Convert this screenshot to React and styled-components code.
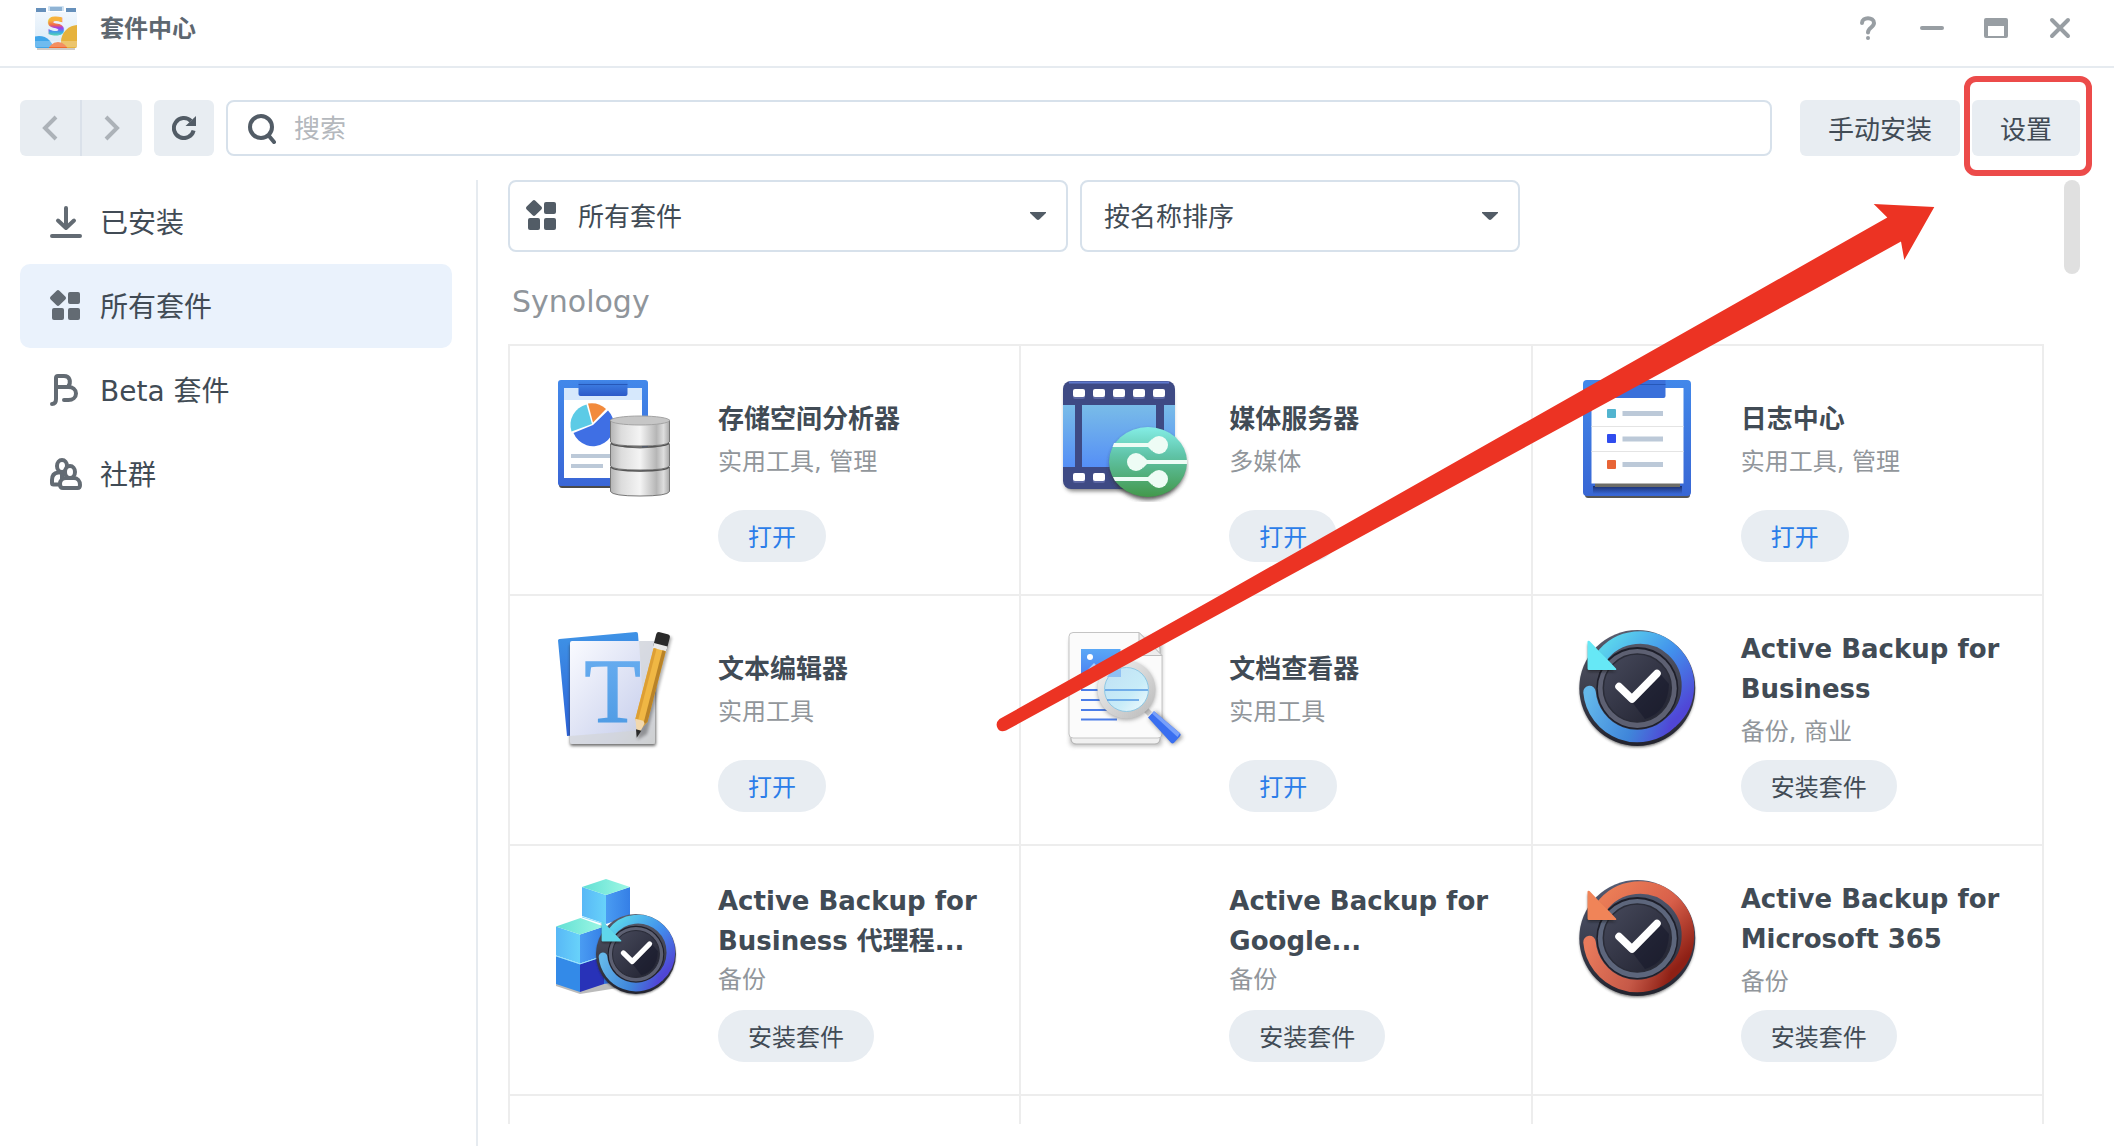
import React, { useState } from 'react';
import styled, { createGlobalStyle } from 'styled-components';

const packages = [
    { name: '存储空间分析器', tags: '实用工具, 管理', installed: true, icon: StorageIcon },
    { name: '媒体服务器', tags: '多媒体', installed: true, icon: MediaIcon },
    { name: '日志中心', tags: '实用工具, 管理', installed: true, icon: LogIcon },
    { name: '文本编辑器', tags: '实用工具', installed: true, icon: TextIcon },
    { name: '文档查看器', tags: '实用工具', installed: true, icon: DocumentIcon },
    { name: 'Active Backup for Business', tags: '备份, 商业', icon: BackupIcon },
    { name: 'Active Backup for Business 代理程...', tags: '备份', clamped: true, icon: AgentIcon },
    { name: 'Active Backup for Google...', tags: '备份', clamped: true },
    { name: 'Active Backup for Microsoft 365', tags: '备份', icon: Microsoft365Icon },
]

const menu = [
    { id: 'installed', label: '已安装', icon: DownloadGlyph },
    { id: 'all', label: '所有套件', icon: GridGlyph },
    { id: 'beta', label: 'Beta 套件', icon: BetaGlyph },
    { id: 'community', label: '社群', icon: PeopleGlyph },
]

export default function App() {
    const [active, setActive] = useState('all');
    const [search, setSearch] = useState('');

    return (
        <Window>
            <GlobalStyle />
            <TitleBar>
                <StoreLogo />
                <h1>套件中心</h1>
                <WindowControls />
            </TitleBar>
            <Toolbar>
                <NavButtons>
                    <button aria-label="后退">
                        <svg width="16" height="28" viewBox="0 0 16 28"><path d="M14 3 3 14l11 11" /></svg>
                    </button>
                    <button aria-label="前进">
                        <svg width="16" height="28" viewBox="0 0 16 28"><path d="M2 3l11 11L2 25" /></svg>
                    </button>
                </NavButtons>
                <RefreshButton aria-label="刷新">
                    <svg width="24" height="24" viewBox="0 0 24 24">
                        <path d="M21.6 14.5A10 10 0 1 1 19 5" fill="none" stroke="#525c66" strokeWidth="4" />
                        <path d="M24 0v10H13.5z" fill="#525c66" />
                    </svg>
                </RefreshButton>
                <SearchBox>
                    <svg width="30" height="32" viewBox="0 0 30 32" fill="none" stroke="#525c66" strokeWidth="4">
                        <circle cx="15" cy="15" r="11" />
                        <path d="m23 24 5 6" strokeLinecap="round" />
                    </svg>
                    <input type="text" aria-label="搜索" placeholder="搜索" value={search} onChange={(e) => setSearch(e.target.value)} />
                </SearchBox>
                <Actions>
                    <ToolButton>手动安装</ToolButton>
                    <Highlight>
                        <ToolButton>设置</ToolButton>
                    </Highlight>
                </Actions>
            </Toolbar>
            <Body>
                <Sidebar>
                    {menu.map((item) => (
                        <MenuItem key={item.id} $active={active === item.id} onClick={() => setActive(item.id)}>
                            <item.icon />
                            <span>{item.label}</span>
                        </MenuItem>
                    ))}
                </Sidebar>
                <Content>
                    <Filters>
                        <SelectBox $width={560} $pad={16}>
                            <GridGlyph color="#525c66" />
                            <select aria-label="套件类别">
                                <option>所有套件</option>
                            </select>
                            <Caret />
                        </SelectBox>
                        <SelectBox $width={440} $pad={22}>
                            <select aria-label="排序方式">
                                <option>按名称排序</option>
                            </select>
                            <Caret />
                        </SelectBox>
                    </Filters>
                    <SectionTitle>Synology</SectionTitle>
                    <PackageGrid>
                        {packages.map((item) => <PackageCard key={item.name} item={item} />)}
                        <Card />
                        <Card />
                        <Card />
                    </PackageGrid>
                </Content>
                <Scrollbar />
            </Body>
            <PointerArrow viewBox="0 0 940 530" aria-hidden="true">
                <path d="M3.5 515 215.7 396 763.3 86 891.3 13.5 877.7 0 938.3 3 908.3 56 905 37.5 817.5 86 249 396 10 526.5Q4 529 1.5 524T3.5 515z" fill="#ec3323" />
            </PointerArrow>
        </Window>
    )
}

function PackageCard({ item }) {
    return (
        <Card>
            <IconSlot>{item.icon && <item.icon />}</IconSlot>
            <CardText>
                <CardInfo $clamped={item.clamped}>
                    <h3>{item.name}</h3>
                    <p>{item.tags}</p>
                </CardInfo>
                <CardButton $open={item.installed}>{item.installed ? '打开' : '安装套件'}</CardButton>
            </CardText>
        </Card>
    )
}

function WindowControls() {
    return (
        <Controls>
            <button aria-label="帮助">
                <svg viewBox="0 0 24 24" fill="none" stroke="#989ea3" strokeWidth="4" strokeLinecap="round">
                    <path d="M6 7C6 .5 18 .5 18 7c0 4.500-6 4.500-6 9.500" />
                    <circle cx="12" cy="22" r="2" fill="#989ea3" stroke="none" />
                </svg>
            </button>
            <button aria-label="最小化">
                <svg viewBox="0 0 24 24"><rect y="10" width="24" height="4" rx="2" fill="#989ea3" /></svg>
            </button>
            <button aria-label="最大化">
                <svg viewBox="0 0 24 24">
                    <path d="M2 2h20q2 0 2 2v16q0 2-2 2H2q-2 0-2-2V4q0-2 2-2zm2 8v10h16V10z" fill="#989ea3" fillRule="evenodd" />
                </svg>
            </button>
            <button aria-label="关闭">
                <svg viewBox="0 0 24 24" stroke="#989ea3" strokeWidth="4" strokeLinecap="round">
                    <path d="m4 4 16 16M20 4 4 20" />
                </svg>
            </button>
        </Controls>
    )
}

function StoreLogo() {
    return (
        <svg width="44" height="46" viewBox="0 0 44 46" aria-hidden="true">
            <defs>
                <linearGradient id="bag" x1="0" y1="0" x2="0" y2="1">
                    <stop offset="0" stopColor="#f1f7fd" />
                    <stop offset="1" stopColor="#d8e9f7" />
                </linearGradient>
                <linearGradient id="bagS" x1="0" y1="0" x2="0" y2="1">
                    <stop offset="0.3" stopColor="#f7b23c" />
                    <stop offset="0.45" stopColor="#f0684a" />
                    <stop offset="0.55" stopColor="#9a3cf2" />
                    <stop offset="0.68" stopColor="#3f9fe8" />
                    <stop offset="0.8" stopColor="#4fd0b4" />
                </linearGradient>
                <clipPath id="bagClip"><path d="M1 8h42v34q0 2-2 2H3q-2 0-2-2z" /></clipPath>
            </defs>
            <path d="M3 44h38v2H3z" fill="#b9b4ae" opacity="0.7" />
            <path d="M2 4h40v4H2z" fill="#6690bb" />
            <path d="M13 8V3q0-2 2-2h14q2 0 2 2v5z" fill="#cfe2f2" stroke="#fff" strokeWidth="2" />
            <path d="M16 3h12v4H16z" fill="#8fb3d4" />
            <g clipPath="url(#bagClip)">
                <path d="M1 8h42v36H1z" fill="url(#bag)" />
                <circle cx="44" cy="38" r="17" fill="#e6b23c" />
                <circle cx="5" cy="47" r="15" fill="#3fa5ea" />
                <circle cx="24" cy="48" r="10" fill="#f0682c" />
                <path d="M1 37h42v6H1z" fill="#fff" opacity="0.25" />
            </g>
            <text x="22" y="31" textAnchor="middle" fontFamily="DejaVu Sans" fontSize="25" fontWeight="700" fill="url(#bagS)" stroke="url(#bagS)">S</text>
        </svg>
    )
}

function DownloadGlyph() {
    return (
        <svg width="32" height="32" viewBox="0 0 32 32" fill="none" stroke="#636b73" strokeWidth="4" strokeLinecap="round" strokeLinejoin="round">
            <path d="M16 2v20M8 14.500l8 7.500 8-7.500M2 30h28" />
        </svg>
    )
}

function GridGlyph({ color = '#636b73' }) {
    return (
        <svg width="32" height="32" viewBox="0 0 32 32" fill={color}>
            <path d="M6.600.700q1.400-1.400 2.800 0l5.900 5.900q1.400 1.400 0 2.800l-5.900 5.900q-1.400 1.400-2.800 0L.7 9.400q-1.400-1.400 0-2.800z" />
            <rect x="18" y="2" width="12" height="12" rx="2" />
            <rect x="2" y="18" width="12" height="12" rx="2" />
            <rect x="18" y="18" width="12" height="12" rx="2" />
        </svg>
    )
}

function BetaGlyph() {
    return (
        <svg width="32" height="32" viewBox="0 0 32 32" fill="none" stroke="#636b73" strokeWidth="4" strokeLinecap="round" strokeLinejoin="round">
            <path d="M2 30c3 0 4-2 4-5V4q0-2 2-2h6c6 0 7.500 6 4 11M6 13h12.500c4 0 7.500 2.500 7.500 6.500s-3.500 6.500-7.500 6.500H14" />
        </svg>
    )
}

function PeopleGlyph() {
    return (
        <svg width="32" height="32" viewBox="0 0 32 32" fill="#fff" stroke="#636b73" strokeWidth="4" strokeLinejoin="round">
            <path d="M8 14.500c-4 .500-6 3.500-6 7.500v3q0 1.500 1.500 1.500H12V14z" />
            <ellipse cx="12" cy="8" rx="5" ry="6" />
            <path d="M10 26c0-4 3-6 6-6h8c3.500 0 6 3 6 7 0 2-1 3-2.500 3H13c-2 0-3-1-3-4z" />
            <ellipse cx="20" cy="14" rx="5" ry="6" />
        </svg>
    )
}

function Caret() {
    return <svg width="16" height="8" viewBox="0 0 16 8" aria-hidden="true"><path d="M0 0h16v1L9.500 7.200q-1.500 1.400-3 0L0 1z" fill="#525c66" /></svg>
}

/* package icons, all on a 128 x 128 canvas */

function StorageIcon() {
    return (
        <svg width="128" height="128" viewBox="0 0 128 128" aria-hidden="true">
            <defs>
                <linearGradient id="board" x1="0" y1="0" x2="0" y2="1">
                    <stop offset="0" stopColor="#4288ea" />
                    <stop offset="1" stopColor="#3a66d6" />
                </linearGradient>
                <linearGradient id="clip" x1="0" y1="0" x2="0" y2="1">
                    <stop offset="0" stopColor="#4288ea" />
                    <stop offset="1" stopColor="#2c5ac8" />
                </linearGradient>
                <linearGradient id="steel">
                    <stop offset="0" stopColor="#b4b4b4" />
                    <stop offset="0.18" stopColor="#dcdcdc" />
                    <stop offset="0.5" stopColor="#f4f4f4" />
                    <stop offset="0.78" stopColor="#b6b6b6" />
                    <stop offset="0.9" stopColor="#dedede" />
                    <stop offset="1" stopColor="#a8a8a8" />
                </linearGradient>
            </defs>
            <rect x="9" y="10" width="88" height="104" rx="3" fill="#4a4a4a" />
            <rect x="8" y="6" width="90" height="106" rx="3" fill="url(#board)" />
            <path d="M14 14h78v90H14z" fill="#fff" />
            <path d="M14 14h78v12H14z" fill="#d6e8fc" />
            <path d="M28.5 6h49v14q0 2-2 2h-45q-2 0-2-2z" fill="url(#clip)" />
            <path d="M28.5 10.5h49" stroke="#2658b8" />
            <path d="M42 50 21.5 57.5A21 21 0 0 1 36.5 30.5z" fill="#5ccbe6" />
            <path d="M43 48.5 38 29.5a21 21 0 0 1 18 5.5z" fill="#f28a3c" />
            <path d="M43 51 58 36.5A21 21 0 1 1 23.5 59z" fill="#3f6fe4" />
            <path d="M21 80h42v4H21zM21 90h32v4H21z" fill="#bcc9d8" />
            <g fill="url(#steel)" stroke="#777" strokeWidth="1">
                <path d="M60.5 93q29.5 8 59 0v24.5q-2 4.5-29.5 4.5t-29.5-4.5z" />
                <path d="M60.5 70q29.5 8 59 0v22q-2 4-29.5 4t-29.5-4z" />
                <path d="M60.5 46h59v22q-2 4-29.5 4t-29.5-4z" />
            </g>
            <ellipse cx="90" cy="46.5" rx="29.5" ry="4.5" fill="#c6c6c6" stroke="#a4a4a4" />
            <path d="M61 69q2 4 29 4t29-4M61 93q2 4 29 4t29-4" fill="none" stroke="#555" strokeWidth="1.5" />
        </svg>
    )
}

function MediaIcon() {
    return (
        <svg width="128" height="128" viewBox="0 0 128 128" aria-hidden="true">
            <defs>
                <linearGradient id="sky" x1="0" y1="0" x2="0" y2="1">
                    <stop offset="0" stopColor="#79bce8" />
                    <stop offset="1" stopColor="#558ff6" />
                </linearGradient>
                <linearGradient id="disc" x1="0" y1="0" x2="0" y2="1">
                    <stop offset="0" stopColor="#84eee6" />
                    <stop offset="0.4" stopColor="#60c4a8" />
                    <stop offset="1" stopColor="#43984b" />
                </linearGradient>
                <filter id="soft" x="-20%" y="-20%" width="140%" height="150%"><feGaussianBlur stdDeviation="2" /></filter>
            </defs>
            <rect x="4" y="12" width="108" height="105" rx="8" fill="#444" opacity="0.7" filter="url(#soft)" />
            <rect x="2" y="7" width="112" height="108" rx="8" fill="#3e4a84" />
            <path d="M8 8.5h100" stroke="#5e78cc" strokeWidth="2" />
            <path d="M2 31h12v62H2zM21 31h74v62H21zM103 31h11v62h-11z" fill="url(#sky)" />
            <g fill="#5c67a4">
                <rect x="12" y="17" width="12" height="8" rx="2" />
                <rect x="32" y="17" width="12" height="8" rx="2" />
                <rect x="52" y="17" width="12" height="8" rx="2" />
                <rect x="72" y="17" width="12" height="8" rx="2" />
                <rect x="92" y="17" width="12" height="8" rx="2" />
                <rect x="12" y="101" width="12" height="8" rx="2" />
                <rect x="32" y="101" width="12" height="8" rx="2" />
            </g>
            <g fill="#fff">
                <rect x="12" y="15" width="12" height="8" rx="2" />
                <rect x="32" y="15" width="12" height="8" rx="2" />
                <rect x="52" y="15" width="12" height="8" rx="2" />
                <rect x="72" y="15" width="12" height="8" rx="2" />
                <rect x="92" y="15" width="12" height="8" rx="2" />
                <rect x="12" y="99" width="12" height="8" rx="2" />
                <rect x="32" y="99" width="12" height="8" rx="2" />
            </g>
            <ellipse cx="87" cy="91" rx="38" ry="35" fill="#333" opacity="0.8" filter="url(#soft)" />
            <ellipse cx="87" cy="88" rx="39" ry="35" fill="url(#disc)" />
            <g fill="#eefcf5">
                <path d="M53 69h34l4-4v12l-4-4H51.500zM126 86H86l-4-4v12l4-4h40zM52 103h35l4-4v12l-4-4H54z" />
                <circle cx="98" cy="71" r="9" />
                <circle cx="75" cy="88" r="9" />
                <circle cx="98" cy="105" r="9" />
            </g>
        </svg>
    )
}

function LogIcon() {
    return (
        <svg width="128" height="128" viewBox="0 0 128 128" aria-hidden="true">
            <defs>
                <linearGradient id="logBoard" x1="0" y1="0" x2="0" y2="1">
                    <stop offset="0" stopColor="#4288ea" />
                    <stop offset="1" stopColor="#3866d4" />
                </linearGradient>
                <linearGradient id="logShade" x1="0" y1="0" x2="0" y2="1">
                    <stop offset="0" stopColor="#1a2f6e" />
                    <stop offset="1" stopColor="#1a2f6e" stopOpacity="0" />
                </linearGradient>
            </defs>
            <rect x="12" y="14" width="105" height="110" rx="3" fill="#555" />
            <rect x="10" y="6" width="108" height="116" rx="4" fill="url(#logBoard)" />
            <path d="M20 112h89v8H20z" fill="url(#logShade)" />
            <path d="M22 108h85v5H22z" fill="#6d6d68" />
            <path d="M18.5 14h92v95.500h-92z" fill="#fff" />
            <path d="M36.5 6h56v16q0 2-2 2h-52q-2 0-2-2z" fill="#3a70da" />
            <path d="M36.5 10.5h56" stroke="#2658b8" />
            <path d="M18.5 52.5h92M18.5 77.5h92" stroke="#e4e4e4" />
            <rect x="34" y="35" width="9" height="9" rx="1" fill="#52b4cf" />
            <rect x="34" y="60" width="9" height="9" rx="1" fill="#2f4cee" />
            <rect x="34" y="86" width="9" height="9" rx="1" fill="#e86436" />
            <path d="M49.5 37H90v5H49.500zM49.5 62.500H90v5H49.500zM49.5 88H90v5H49.500z" fill="#bcc9d8" />
        </svg>
    )
}

function TextIcon() {
    return (
        <svg width="128" height="128" viewBox="0 0 128 128" aria-hidden="true">
            <defs>
                <linearGradient id="sheet" x1="0" y1="0" x2="0" y2="1">
                    <stop offset="0" stopColor="#3f93e6" />
                    <stop offset="1" stopColor="#2c62d8" />
                </linearGradient>
                <linearGradient id="glass" x1="0" y1="0" x2="1" y2="1">
                    <stop offset="0" stopColor="#fafbff" />
                    <stop offset="0.7" stopColor="#d2d8f0" />
                    <stop offset="1" stopColor="#c8c9cb" />
                </linearGradient>
                <linearGradient id="letter" x1="0" y1="0" x2="0" y2="1">
                    <stop offset="0" stopColor="#6cb0f2" />
                    <stop offset="1" stopColor="#4a98e2" />
                </linearGradient>
                <filter id="textSoft" x="-20%" y="-20%" width="140%" height="140%"><feGaussianBlur stdDeviation="1.5" /></filter>
            </defs>
            <path d="M8 16.5q0-1.500 1.500-1.600L86 8q2 0 2 2l7 94-78 8z" fill="url(#sheet)" />
            <rect x="20" y="20" width="86" height="102" rx="2" fill="#333" opacity="0.7" filter="url(#textSoft)" />
            <rect x="20" y="17" width="85" height="103" rx="2" fill="url(#glass)" />
            <path d="m20 112 75-6-6-89h16v103H20z" fill="#d2d3d4" opacity="0.6" />
            <text x="62.5" y="98" textAnchor="middle" fontFamily="Liberation Serif" fontSize="92" fill="url(#letter)" stroke="url(#letter)" strokeWidth="1.5">T</text>
            <g transform="translate(86.7 113.7) rotate(14.5)">
                <path d="M-5-106h14v100l-8 8z" fill="#000" opacity="0.3" filter="url(#textSoft)" />
                <path d="M-7-105q0-3 3-3h8q3 0 3 3v13H-7z" fill="#2a2a2a" />
                <path d="M-7-96H7v6H-7z" fill="#e8e8e8" />
                <path d="M-6-91H6.500v73L0-6l-6-12z" fill="#f0b744" />
                <path d="M3-91h3.500v73L3-13z" fill="#b98328" />
                <path d="M-6-91h3v75l-3-2z" fill="#dd9f34" />
                <path d="M-6-18h8l2 2L2-7h-4z" fill="#f2d8ae" />
                <path d="M-2.8-8h5.600L0 0z" fill="#2a2a2a" />
            </g>
        </svg>
    )
}

function DocumentIcon() {
    return (
        <svg width="128" height="128" viewBox="0 0 128 128" aria-hidden="true">
            <defs>
                <linearGradient id="photo" x1="0" y1="0" x2="0" y2="1">
                    <stop offset="0" stopColor="#5aa8f6" />
                    <stop offset="1" stopColor="#4a7ff2" />
                </linearGradient>
                <linearGradient id="rim" x1="0" y1="0" x2="1" y2="1">
                    <stop offset="0" stopColor="#f4f4f4" />
                    <stop offset="1" stopColor="#b9b9b9" />
                </linearGradient>
                <linearGradient id="lens" x1="0" y1="0" x2="1" y2="1">
                    <stop offset="0" stopColor="#bfe0f4" />
                    <stop offset="0.6" stopColor="#c8ecf8" />
                    <stop offset="1" stopColor="#f2fbfe" />
                </linearGradient>
                <filter id="docSoft" x="-20%" y="-20%" width="140%" height="140%"><feGaussianBlur stdDeviation="2" /></filter>
            </defs>
            <rect x="9" y="14" width="92" height="108" rx="4" fill="#777" opacity="0.5" filter="url(#docSoft)" />
            <rect x="10" y="20" width="89" height="100" rx="5" fill="#f0f0f0" stroke="#b0b0b0" />
            <path d="M12 8.5h66l23 23V110q0 4-4 4H12q-4 0-4-4V12.500q0-4 4-4z" fill="#fbfbfb" stroke="#c4c4c4" />
            <path d="M78 8.5 101 31.5H83q-5 0-5-5z" fill="#ededed" stroke="#bdbdbd" />
            <path d="M20 25h39.500v28H20z" fill="url(#photo)" />
            <circle cx="29" cy="33" r="3" fill="#fff" />
            <path d="m20 53 13-14 7 7 8-12 11.500 11v8z" fill="#a9cbfb" />
            <path d="M20 66h24M20 76h20M20 86h26M20 95.5h36" stroke="#4a7de8" strokeWidth="2" />
            <path d="m88 95 24 26 10-8-27-26z" fill="#333" opacity="0.5" filter="url(#docSoft)" />
            <path d="m82 87 4-4 5 5-4 4z" fill="#c8c8c8" />
            <path d="M87 93.5 93 87.300l26 22q1.500 1.500 0 3l-6 6.500q-1.500 1.500-3 0z" fill="#3a6ff0" />
            <path d="m91 89.500 2-2.200 26 22-2.500 3.700z" fill="#78a0fa" />
            <circle cx="65.5" cy="67" r="29" fill="#555" opacity="0.5" filter="url(#docSoft)" />
            <circle cx="65.5" cy="65.5" r="29" fill="url(#rim)" />
            <circle cx="65.5" cy="65.5" r="22" fill="url(#lens)" stroke="#8fc8e4" />
            <path d="M44 66h43M46 76h32" stroke="#5c9fe6" strokeWidth="2" opacity="0.8" />
            <path d="M46 53h14v-8q-10 1-14 8z" fill="#8fc0f4" />
        </svg>
    )
}

// id keeps the gradient names apart, since the dial is drawn several times
function Dial({ id, base, rim, from, middle, to, tail, arrow }) {
    return (
        <g>
            <defs>
                <linearGradient id={id + 'Base'} x1="0" y1="0" x2="0" y2="1">
                    <stop offset="0" stopColor={base} />
                    <stop offset="1" stopColor="#22232e" />
                </linearGradient>
                <linearGradient id={id + 'Top'} gradientUnits="userSpaceOnUse" x1="26" y1="30" x2="98" y2="100">
                    <stop offset="0" stopColor={from} />
                    <stop offset="0.5" stopColor={middle} />
                    <stop offset="1" stopColor={to} />
                </linearGradient>
                <linearGradient id={id + 'Tail'} gradientUnits="userSpaceOnUse" x1="98" y1="100" x2="16" y2="68">
                    <stop offset="0" stopColor={to} />
                    <stop offset="0.4" stopColor={middle} stopOpacity="0.9" />
                    <stop offset="1" stopColor={tail} />
                </linearGradient>
                <linearGradient id={id + 'Face'} x1="0" y1="0" x2="1" y2="1">
                    <stop offset="0" stopColor="#474a5c" />
                    <stop offset="1" stopColor="#20212f" />
                </linearGradient>
                <filter id={id + 'Soft'} x="-20%" y="-20%" width="140%" height="140%"><feGaussianBlur stdDeviation="1.5" /></filter>
            </defs>
            <circle cx="64.3" cy="66" r="57" fill="#222" opacity="0.7" filter={`url(#${id}Soft)`} />
            <circle cx="64.3" cy="64" r="58" fill={`url(#${id}Base)`} />
            <circle cx="64.3" cy="64" r="41" fill="#1d1e29" />
            <circle cx="64.3" cy="64.5" r="39.5" fill={rim} />
            <circle cx="64.3" cy="64" r="34" fill={`url(#${id}Face)`} stroke="#2a2c38" strokeWidth="1.5" />
            <path d="M59 78 84 46l12 14q-1 28-24 35z" fill="#16172a" opacity="0.55" />
            <g fill="none" strokeWidth="12.5">
                <path d="M98.2 98A48 48 0 0 1 16.5 68" stroke={`url(#${id}Tail)`} strokeLinecap="round" />
                <path d="M28 33.5A48 48 0 1 1 98.2 98" stroke={`url(#${id}Top)`} />
            </g>
            <path d="M15 19v27q0 1.500 1.500 1.500h26z" fill="#111" opacity="0.6" filter={`url(#${id}Soft)`} />
            <path d="M14.5 18q0-2 2-1l8.500 9 10 10 8 8.500q1 1.500-1 1.500H16q-1.500 0-1.500-1.500z" fill={arrow} />
            <path d="m46 62.5 13 12.500 25-25.500" fill="none" stroke="#fff" strokeWidth="7.5" strokeLinecap="round" strokeLinejoin="round" />
        </g>
    )
}

function BackupIcon() {
    return (
        <svg width="128" height="128" viewBox="0 0 128 128" aria-hidden="true">
            <Dial id="abb" base="#5a5d6e" rim="#5d6072" from="#5ad2ec" middle="#4290ec" to="#5046d6" tail="#64b8ea" arrow="#66e8f6" />
        </svg>
    )
}

function Microsoft365Icon() {
    return (
        <svg width="128" height="128" viewBox="0 0 128 128" aria-hidden="true">
            <Dial id="ms" base="#565d74" rim="#5d667c" from="#ea7c56" middle="#d85f4a" to="#8e2015" tail="#e87a5c" arrow="#f08458" />
        </svg>
    )
}

function AgentIcon() {
    return (
        <svg width="128" height="128" viewBox="0 0 128 128" aria-hidden="true">
            <defs>
                <linearGradient id="cubeTop"><stop offset="0" stopColor="#62dfd4" /><stop offset="1" stopColor="#9ef8e4" /></linearGradient>
                <linearGradient id="cubeLeft"><stop offset="0" stopColor="#58b8f6" /><stop offset="1" stopColor="#68d2fa" /></linearGradient>
                <linearGradient id="cubeRight"><stop offset="0" stopColor="#4a9cf2" /><stop offset="1" stopColor="#357fe6" /></linearGradient>
            </defs>
            <path d="M6 108v4l24 8 50-8v-5z" fill="#777" opacity="0.5" />
            <path d="m54 80 26-8v34l-26 4z" fill="#2d6fe0" />
            <path d="m6 82 24 8v28L6 110z" fill="#338ae8" />
            <path d="m30 90 24-8v28l-24 8z" fill="#2832b8" />
            <path d="m6 52.500 24 8v29L6 81.500z" fill="url(#cubeLeft)" />
            <path d="m30 60.500 24-8v29l-24 8z" fill="url(#cubeRight)" />
            <path d="m6 52.500 24.500-8.500L54 52.500l-24 8z" fill="url(#cubeTop)" />
            <path d="m32 13 24 8v29l-24-8z" fill="url(#cubeLeft)" />
            <path d="m56 21 24-8v29l-24 8z" fill="url(#cubeRight)" />
            <path d="M32 13 56 5l24 8-24 8z" fill="url(#cubeTop)" />
            <path d="m32 43 24 7.500M6 82l24 8 24-8" fill="none" stroke="#8fe0fc" />
            <g transform="translate(41.6 35.8) scale(0.69)">
                <Dial id="agent" base="#5a5d6e" rim="#5d6072" from="#5ad2ec" middle="#4290ec" to="#5046d6" tail="#64b8ea" arrow="#5fd6ea" />
            </g>
        </svg>
    )
}

const GlobalStyle = createGlobalStyle`
    *{
        box-sizing: border-box;
    }
    body{
        margin: 0;
        background-color: #fff;
        color: #414b55;
        font-family: 'DejaVu Sans', 'Noto Sans CJK SC', sans-serif;
    }
    button, input, select{
        margin: 0;
        padding: 0;
        border: 0;
        outline: 0;
        background: none;
        color: inherit;
        font-family: inherit;
    }
    button{
        cursor: pointer;
    }
    svg{
        display: block;
        flex: none;
    }
`
const Window = styled.div`
    position: relative;
    display: flex;
    flex-direction: column;
    height: 100vh;
    overflow: hidden;
`
const TitleBar = styled.header`
    display: flex;
    align-items: center;
    height: 68px;
    padding: 0 42px 10px 34px;
    border-bottom: 2px solid #e6ebf0;
    h1{
        flex: 1;
        margin: 0 0 0 22px;
        padding-bottom: 4px;
        color: #5e6770;
        font-size: 24px;
        font-weight: 600;
    }
    > svg{
        margin-bottom: 2px;
    }
`
const Controls = styled.div`
    display: flex;
    gap: 40px;
    svg{
        width: 24px;
        height: 24px;
    }
`
const Toolbar = styled.div`
    display: flex;
    gap: 12px;
    padding: 32px 34px 24px 20px;
`
const NavButtons = styled.div`
    display: flex;
    height: 56px;
    border-radius: 6px;
    background-color: #e8edf2;
    button{
        display: flex;
        align-items: center;
        justify-content: center;
        width: 60px;
    }
    button + button{
        width: 62px;
        border-left: 2px solid #dae1ea;
    }
    path{
        fill: none;
        stroke: #acb2b8;
        stroke-width: 4px;
    }
`
const RefreshButton = styled.button`
    display: flex;
    align-items: center;
    justify-content: center;
    width: 60px;
    height: 56px;
    border-radius: 6px;
    background-color: #e8edf2;
`
const SearchBox = styled.div`
    display: flex;
    flex: 1;
    align-items: center;
    gap: 18px;
    height: 56px;
    padding: 0 18px;
    border: 2px solid #d7e1eb;
    border-radius: 8px;
    input{
        flex: 1;
        min-width: 0;
        height: 100%;
        padding-top: 2px;
        font-size: 26px;
    }
    input::placeholder{
        color: #b4b8bd;
    }
`
const Actions = styled.div`
    display: flex;
    gap: 12px;
    margin-left: 16px;
`
const ToolButton = styled.button`
    height: 56px;
    padding: 0 28px 2px;
    border-radius: 6px;
    background-color: #e8edf2;
    font-size: 26px;
    white-space: nowrap;
`
const Highlight = styled.div`
    position: relative;
    &::after{
        content: '';
        position: absolute;
        inset: -24px -12px -20px -8px;
        border: 6px solid #ec4b4a;
        border-radius: 12px;
        pointer-events: none;
    }
`
const Body = styled.div`
    display: flex;
    flex: 1;
    min-height: 0;
`
const Sidebar = styled.nav`
    flex: none;
    width: 478px;
    padding: 0 24px 0 20px;
    border-right: 2px solid #e6ebf0;
`
const MenuItem = styled.button`
    display: flex;
    align-items: center;
    gap: 18px;
    width: 100%;
    height: 84px;
    padding-left: 30px;
    border-radius: 10px;
    background-color: ${(props) => props.$active ? '#eaf2fc' : 'transparent'};
    font-size: 28px;
    span{
        padding-bottom: 2px;
    }
`
const Content = styled.main`
    flex: 1;
    min-width: 0;
    margin: 0 20px 22px 30px;
    overflow: hidden;
`
const Filters = styled.div`
    display: flex;
    gap: 12px;
`
const SelectBox = styled.div`
    display: flex;
    flex: 0 1 ${(props) => props.$width}px;
    align-items: center;
    gap: 20px;
    height: 72px;
    padding: 0 20px 0 ${(props) => props.$pad}px;
    border: 2px solid #d7e1eb;
    border-radius: 8px;
    select{
        flex: 1;
        min-width: 0;
        height: 100%;
        padding-top: 2px;
        appearance: none;
        font-size: 26px;
    }
`
const SectionTitle = styled.h2`
    margin: 0;
    padding: 30px 4px 22px;
    color: #8f959b;
    font-size: 30px;
    font-weight: 400;
    line-height: 40px;
`
const PackageGrid = styled.div`
    display: grid;
    grid-template-columns: repeat(3, 1fr);
    border-top: 2px solid #ededed;
    border-left: 2px solid #ededed;
`
const Card = styled.article`
    display: flex;
    gap: 40px;
    height: 250px;
    padding: 24px 20px 0 40px;
    border-right: 2px solid #ededed;
    border-bottom: 2px solid #ededed;
`
const IconSlot = styled.div`
    flex: none;
    width: 128px;
    padding-top: 4px;
`
const CardText = styled.div`
    flex: 1;
    min-width: 0;
`
const CardInfo = styled.div`
    display: flex;
    flex-direction: column;
    justify-content: center;
    gap: ${(props) => props.$clamped ? 0 : 4}px;
    height: 140px;
    h3{
        margin: 0;
        font-size: 26px;
        font-weight: 700;
        line-height: 40px;
    }
    p{
        margin: 0;
        color: #91969b;
        font-size: 24px;
        line-height: 38px;
    }
`
const CardButton = styled.button`
    height: 52px;
    padding: 0 30px 2px;
    border-radius: 26px;
    background-color: #e8edf2;
    color: ${(props) => props.$open ? '#2b7de9' : '#414b55'};
    font-size: 24px;
`
const Scrollbar = styled.div`
    flex: none;
    width: 16px;
    height: 94px;
    margin-right: 34px;
    border-radius: 8px;
    background-color: #e0e0e0;
`
const PointerArrow = styled.svg`
    position: absolute;
    top: 204px;
    right: 178px;
    width: 940px;
    height: 530px;
    pointer-events: none;
`
